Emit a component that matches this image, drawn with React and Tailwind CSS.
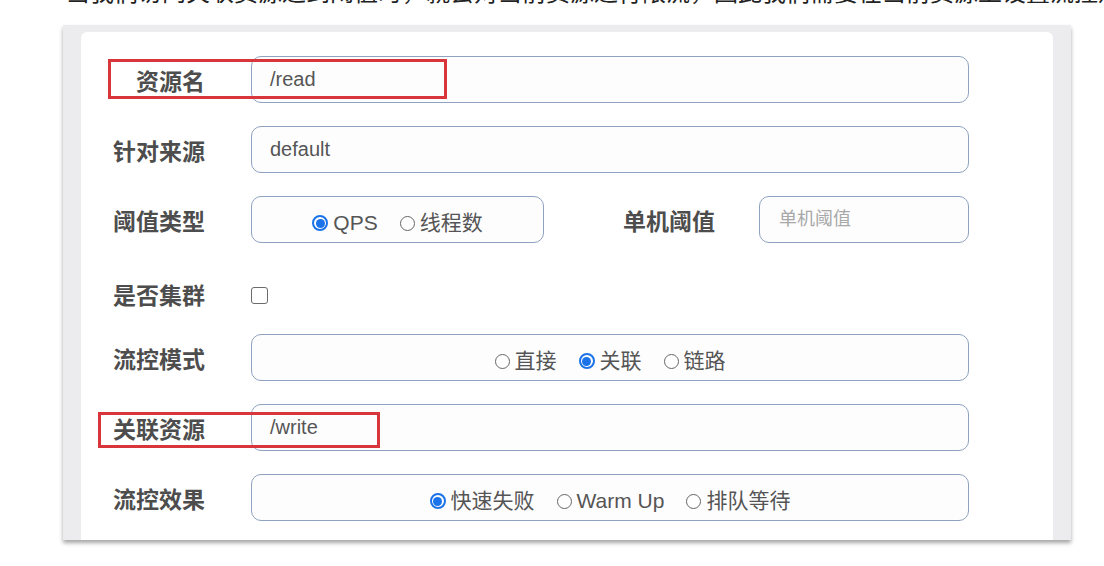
import React from 'react'

const FONT = '"Liberation Sans", "Noto Sans CJK SC", sans-serif'

function Radio({ checked, label }) {
    return (
        <label className="flex items-center gap-[5px]">
            {checked ? (
                <span className="w-[16px] h-[16px] rounded-full border-2 border-[#1a73e8] flex items-center justify-center bg-white">
                    <span className="w-[9px] h-[9px] rounded-full bg-[#1a73e8]" />
                </span>
            ) : (
                <span className="w-[15px] h-[15px] rounded-full border border-[#666] bg-white" />
            )}
            <span className="text-[21px] text-[#555]">{label}</span>
        </label>
    )
}

function Label({ children }) {
    return (
        <div className="w-[124px] shrink-0 text-right text-[23px] font-bold text-[#4d4d4d] pt-[6px]">
            {children}
        </div>
    )
}

const box = 'h-[47px] rounded-[10px] border border-[#8fa2bf] bg-[#fdfdfe]'

export default function App() {
    return (
        <div className="w-[1104px] h-[566px] bg-white overflow-hidden" style={{ fontFamily: FONT }}>
            {/* caption above the screenshot, cut off in the original */}
            <div className="h-[9px] overflow-hidden pl-[66px]">
                <div className="-mt-[22px] text-[24px] leading-[30px] text-[#222] whitespace-nowrap">
                    当我们访问关联资源达到阈值时，就会对当前资源进行限流，因此我们需要在当前资源上设置流控规则（
                </div>
            </div>

            <div className="ml-[63px] mt-[16px] w-[1008px] bg-[#ececee] pt-[7px] pl-[18px] pr-[18px] shadow-[0_3px_4px_rgba(0,0,0,0.35)]">
                <div className="relative h-[508px] bg-white rounded-t-[6px] pt-[24px] pr-[84px] flex flex-col gap-[23px]">
                    {/* 资源名 */}
                    <div className="flex items-center">
                        <Label>资源名</Label>
                        <div className={`ml-[46px] flex-1 ${box} flex items-center pl-[18px] text-[20px] text-[#555] pb-[2px]`}>/read</div>
                    </div>

                    {/* 针对来源 */}
                    <div className="flex items-center">
                        <Label>针对来源</Label>
                        <div className={`ml-[46px] flex-1 ${box} flex items-center pl-[18px] text-[20px] text-[#555] pb-[2px]`}>default</div>
                    </div>

                    {/* 阈值类型 + 单机阈值 */}
                    <div className="flex items-center">
                        <Label>阈值类型</Label>
                        <div className={`ml-[46px] w-[293px] ${box} flex items-center justify-center gap-[22px] pt-[7px]`}>
                            <Radio checked label="QPS" />
                            <Radio label="线程数" />
                        </div>
                        <div className="flex-1 text-right text-[23px] font-bold text-[#4d4d4d] pt-[6px]">单机阈值</div>
                        <div className={`ml-[44px] w-[210px] ${box} flex items-center pl-[19px] text-[18px] text-[#a8a8a8]`}>单机阈值</div>
                    </div>

                    {/* 是否集群 */}
                    <div className="flex items-center h-[45px] pt-[10px]">
                        <Label>是否集群</Label>
                        <span className="ml-[46px] w-[17px] h-[17px] rounded-[3px] border border-[#6b6b6b] bg-white mt-[4px]" />
                    </div>

                    {/* 流控模式 */}
                    <div className="flex items-center">
                        <Label>流控模式</Label>
                        <div className={`ml-[46px] flex-1 ${box} flex items-center justify-center gap-[22px] pt-[7px]`}>
                            <Radio label="直接" />
                            <Radio checked label="关联" />
                            <Radio label="链路" />
                        </div>
                    </div>

                    {/* 关联资源 */}
                    <div className="flex items-center">
                        <Label>关联资源</Label>
                        <div className={`ml-[46px] flex-1 ${box} flex items-center pl-[18px] text-[20px] text-[#555] pb-[2px]`}>/write</div>
                    </div>

                    {/* 流控效果 */}
                    <div className="flex items-center">
                        <Label>流控效果</Label>
                        <div className={`ml-[46px] flex-1 ${box} flex items-center justify-center gap-[22px] pt-[7px]`}>
                            <Radio checked label="快速失败" />
                            <Radio label="Warm Up" />
                            <Radio label="排队等待" />
                        </div>
                    </div>

                    {/* red highlight boxes */}
                    <div className="absolute left-[27px] top-[27px] w-[339px] h-[40px] border-[3px] border-[#d8363a]" />
                    <div className="absolute left-[17px] top-[380px] w-[282px] h-[36px] border-[3px] border-[#d8363a]" />
                </div>
            </div>
        </div>
    )
}
